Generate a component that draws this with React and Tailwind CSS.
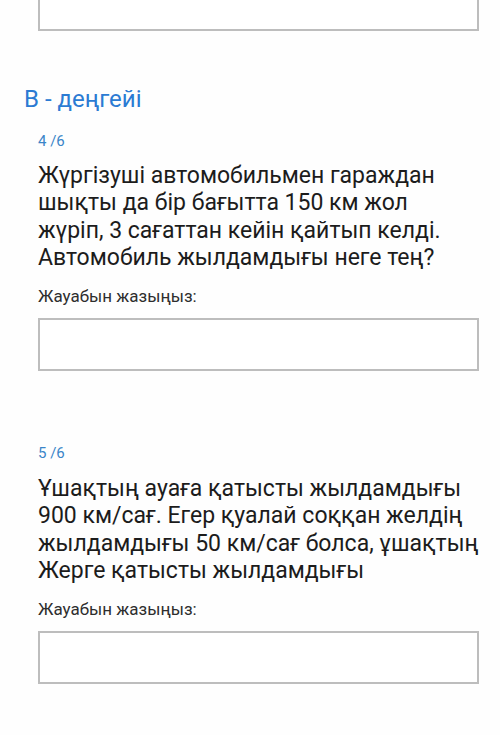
import React from "react";

function AnswerBox({ className = "" }) {
  return <div className={"ml-[38px] mr-[21px] h-[53px] border-2 border-[#bdbdbd] bg-white " + className} />;
}

export default function App() {
  return (
    <div className="w-[500px] h-[735px] bg-[#fefefe] overflow-hidden" style={{ fontFamily: "Roboto, 'Noto Sans', sans-serif" }}>
      <div className="ml-[38px] mr-[21px] h-[31px] border-2 border-t-0 border-[#bdbdbd] bg-white" />
      <div className="pt-[53px] pl-[24px] text-[24px] leading-[30px] text-[#2b7bd3]">В - деңгейі</div>
      <div className="pl-[38px] pt-[18px] text-[15px] leading-[18px] text-[#3a85c8]">4 /6</div>
      <div className="pl-[38px] pr-[22px] pt-[12px] text-[23px] leading-[27.3px] text-[#1c1c1c]">
        Жүргізуші автомобильмен гараждан шықты да бір бағытта 150 км жол жүріп, 3 сағаттан кейін қайтып келді. Автомобиль жылдамдығы неге тең?
      </div>
      <div className="pl-[38px] pt-[15px] text-[17px] leading-[20px] text-[#2e2e2e]">Жауабын жазыңыз:</div>
      <AnswerBox className="mt-[12px]" />
      <div className="pl-[38px] pt-[73px] text-[15px] leading-[18px] text-[#3a85c8]">5 /6</div>
      <div className="pl-[38px] pr-[20px] pt-[13px] text-[23px] leading-[27.3px] text-[#1c1c1c]">
        Ұшақтың ауаға қатысты жылдамдығы 900 км/сағ. Егер қуалай соққан желдің жылдамдығы 50 км/сағ болса, ұшақтың Жерге қатысты жылдамдығы
      </div>
      <div className="pl-[38px] pt-[15px] text-[17px] leading-[20px] text-[#2e2e2e]">Жауабын жазыңыз:</div>
      <AnswerBox className="mt-[12px]" />
    </div>
  );
}
